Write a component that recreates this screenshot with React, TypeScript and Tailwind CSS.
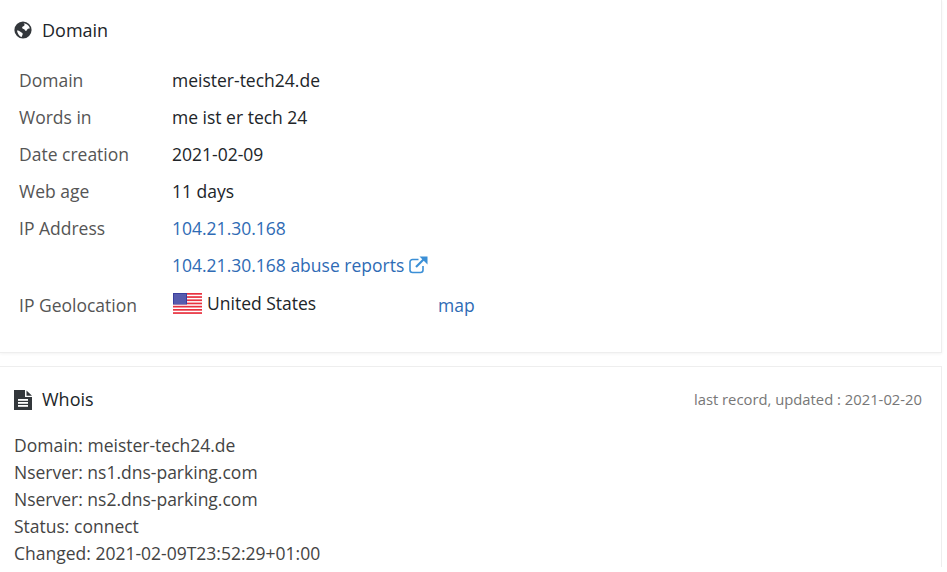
import React from "react";

function Globe() {
  return (
    <svg width="18" height="18" viewBox="0 0 18 18" className="shrink-0">
      <circle cx="9" cy="9" r="8.6" fill="#33373b" />
      <path d="M9.5 2.2c1.2.6 1.4 1.8.6 2.6-.7.7-2 .8-2 1.9 0 1 1.4 1 2.2 1.5.6.4.5 1.3 1.2 1.6 1 .4 1.5-.7 1.9-1.5.4-.8 1.4-.9 2.4-.7-.1-2.4-2.5-5-6.3-5.4z" fill="#fff" />
      <path d="M3 9.5c1.1-.3 2.1.2 3 1 .9.8 2 1 2.6 1.9.4.7-.2 1.5-.5 2.3-.2.6-.3 1-.4 1.2-2.3-.4-4.2-3.3-4.7-6.4z" fill="#fff" />
    </svg>
  );
}

function FileIcon() {
  return (
    <svg width="18" height="20" viewBox="0 0 18 20" className="shrink-0">
      <path d="M0 0h11v7h7v13H0z" fill="#33373b" />
      <path d="M12.5 0.5L18 5.8h-5.500z" fill="#33373b" />
      <rect x="4" y="9" width="10" height="1.8" fill="#fff" />
      <rect x="4" y="12" width="10" height="1.8" fill="#fff" />
      <rect x="4" y="15" width="10" height="1.8" fill="#fff" />
    </svg>
  );
}

function Flag() {
  const stripes = [0, 1, 2, 3, 4, 5, 6];
  return (
    <svg width="29" height="22" viewBox="0 0 29 22" className="shrink-0">
      <rect width="29" height="22" fill="#fff" />
      {stripes.map((i) => (
        <rect key={i} x="0" y={i * 3.2} width="29" height="1.7" fill="#e8313f" />
      ))}
      <rect width="14" height="11.5" fill="#3b3f9e" />
      {[1.5, 3.5, 5.5, 7.5, 9.5].map((y) =>
        [1.5, 3.5, 5.5, 7.5, 9.5, 11.5].map((x) => (
          <rect key={`${x}-${y}`} x={x} y={y} width="1" height="1" fill="#aab0e0" />
        ))
      )}
    </svg>
  );
}

function ExtLink() {
  return (
    <svg width="19" height="18" viewBox="0 0 19 18" className="ml-[5px] shrink-0 -translate-y-px" fill="none" stroke="#3b8fd6">
      <path d="M14 10v4a2.5 2.5 0 0 1-2.500 2.500H3.500A2.500 2.500 0 0 1 1 14V6a2.500 2.500 0 0 1 2.500-2.500h6" strokeWidth="1.6" />
      <path d="M7 11L15 3" strokeWidth="2.2" />
      <path d="M10.5 0.5H18.5V8.5z" fill="#3b8fd6" stroke="none" />
    </svg>
  );
}

const rowClass = "flex h-[37px] items-center";
const labelClass = "w-[153px] shrink-0 text-[#555]";

export default function App() {
  return (
    <div className="h-[572px] overflow-hidden bg-white font-['Open_Sans',sans-serif] text-[17.5px] text-[#212529]">
      <section className="mr-[5px] h-[353px] border-r border-b border-[#eeeeee] pl-[14px] shadow-[0_1px_3px_rgba(0,0,0,0.05)]">
        <h2 className="mb-[2px] flex h-[60px] items-center gap-[10px] text-[18px] text-[#212529]">
          <Globe />
          <span className="font-medium">Domain</span>
        </h2>
        <div className="pl-[5px]">
          <div className={rowClass}><span className={labelClass}>Domain</span><span>meister-tech24.de</span></div>
          <div className={rowClass}><span className={labelClass}>Words in</span><span>me ist er tech 24</span></div>
          <div className={rowClass}><span className={labelClass}>Date creation</span><span>2021-02-09</span></div>
          <div className={rowClass}><span className={labelClass}>Web age</span><span>11 days</span></div>
          <div className={rowClass}><span className={labelClass}>IP Address</span><span className="text-[#2f6bb5]">104.21.30.168</span></div>
          <div className={rowClass}><span className={labelClass}></span><span className="flex items-center text-[#2f6bb5]">104.21.30.168 abuse reports<ExtLink /></span></div>
          <div className="mt-[3px] flex h-[37px] items-center">
            <span className={labelClass}>IP Geolocation</span>
            <span className="flex w-[266px] -translate-y-[2px] items-center gap-[5px] pl-px"><Flag /><span>United States</span></span>
            <span className="text-[#2f6bb5]">map</span>
          </div>
        </div>
      </section>
      <section className="mr-[5px] mt-[13px] border-t border-r border-[#eeeeee] px-[14px]">
        <div className="flex h-[65px] items-center justify-between pr-[5px]">
          <h2 className="flex items-center gap-[10px] text-[18px] text-[#212529]">
            <FileIcon />
            <span className="font-medium">Whois</span>
          </h2>
          <span className="text-[14.8px] text-[#777]">last record, updated : 2021-02-20</span>
        </div>
        <div className="leading-[27px] text-[#444]">
          <div>Domain: meister-tech24.de</div>
          <div>Nserver: ns1.dns-parking.com</div>
          <div>Nserver: ns2.dns-parking.com</div>
          <div>Status: connect</div>
          <div>Changed: 2021-02-09T23:52:29+01:00</div>
        </div>
      </section>
    </div>
  );
}
